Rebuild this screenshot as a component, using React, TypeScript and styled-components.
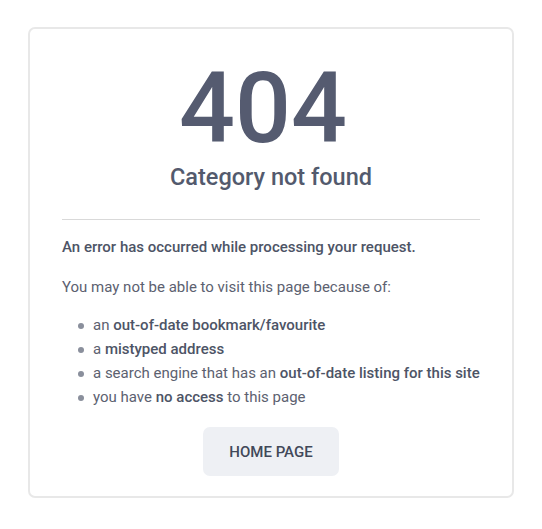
import styled, { createGlobalStyle } from 'styled-components'

const GlobalStyle = createGlobalStyle`
  html, body {
    margin: 0;
    padding: 0;
    background: #ffffff;
  }
  body {
    font-family: Roboto, 'Liberation Sans', sans-serif;
    color: #555b6e;
  }
`

const Page = styled.div`
  padding: 27px 28px 30px;
`

const Card = styled.div`
  border: 2px solid #e8e8e8;
  border-radius: 7px;
  padding: 30px 32px 20px;
  display: flex;
  flex-direction: column;
`

const Code = styled.h1`
  margin: 0;
  padding-right: 16px;
  font-size: 98.5px;
  font-weight: 500;
  line-height: 100px;
  text-align: center;
  color: #555b70;
`

const Subtitle = styled.h2`
  margin: 3px 0 0;
  font-size: 23.5px;
  font-weight: 500;
  line-height: 30px;
  text-align: center;
  color: #535a6d;
`

const Divider = styled.hr`
  width: 100%;
  border: 0;
  border-top: 1px solid #d9d9d9;
  margin: 27px 0 16px;
`

const Lead = styled.p`
  margin: 0;
  font-size: 15px;
  font-weight: 500;
  line-height: 22px;
  color: #4d5466;
`

const Text = styled.p`
  margin: 18px 0 0;
  font-size: 15px;
  line-height: 22px;
  color: #5c6170;
`

const Reasons = styled.ul`
  list-style: none;
  margin: 15px 0 0;
  padding: 0 0 0 16px;
  display: flex;
  flex-direction: column;
`

const Reason = styled.li`
  position: relative;
  padding-left: 15px;
  font-size: 15px;
  line-height: 24px;
  color: #5c6170;

  &:before {
    content: '';
    position: absolute;
    left: 0;
    top: 10px;
    width: 6px;
    height: 6px;
    border-radius: 50%;
    background: #8a8f9c;
  }

  b {
    font-weight: 500;
    color: #4d5466;
  }
`

const HomeButton = styled.a`
  align-self: center;
  margin-top: 18px;
  width: 136px;
  height: 49px;
  display: flex;
  align-items: center;
  justify-content: center;
  background: #eef0f4;
  border-radius: 7px;
  font-size: 15px;
  font-weight: 500;
  color: #414859;
  text-decoration: none;
`

export default function App() {
  return (
    <>
      <GlobalStyle />
      <Page>
        <Card>
          <Code>404</Code>
          <Subtitle>Category not found</Subtitle>
          <Divider />
          <Lead>An error has occurred while processing your request.</Lead>
          <Text>You may not be able to visit this page because of:</Text>
          <Reasons>
            <Reason>
              an <b>out-of-date bookmark/favourite</b>
            </Reason>
            <Reason>
              a <b>mistyped address</b>
            </Reason>
            <Reason>
              a search engine that has an <b>out-of-date listing for this site</b>
            </Reason>
            <Reason>
              you have <b>no access</b> to this page
            </Reason>
          </Reasons>
          <HomeButton href="#">HOME PAGE</HomeButton>
        </Card>
      </Page>
    </>
  )
}
